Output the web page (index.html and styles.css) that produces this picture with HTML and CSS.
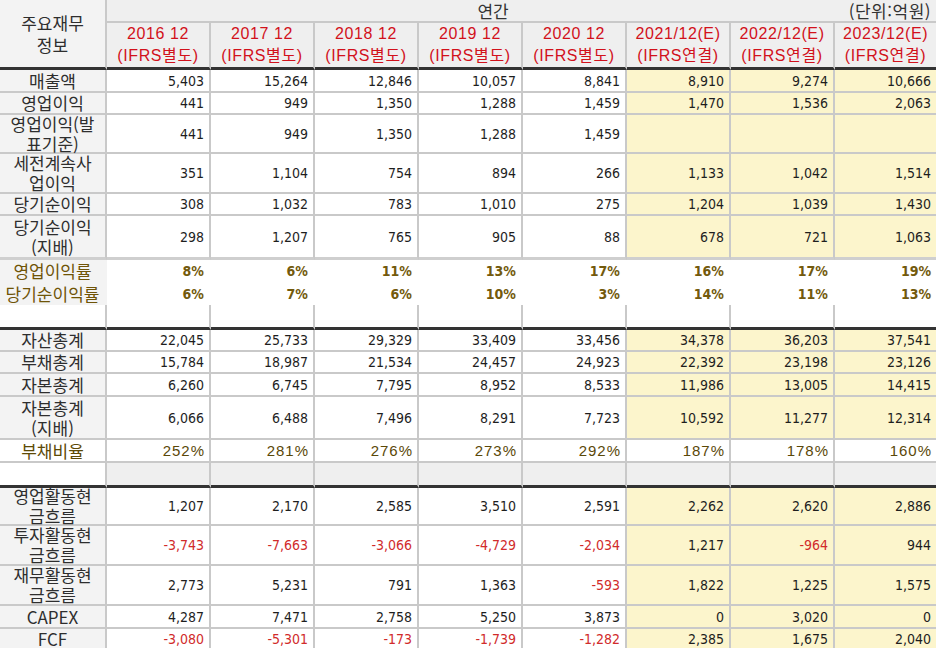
FILE: index.html
```html
<!DOCTYPE html>
<html lang="ko">
<head>
<meta charset="utf-8">
<title>주요재무정보</title>
<link rel="stylesheet" href="styles.css">
</head>
<body>
<table class="fin">
  <colgroup>
    <col class="c-lbl"><col class="c-d"><col class="c-d"><col class="c-d"><col class="c-d"><col class="c-d"><col class="c-d"><col class="c-d"><col class="c-last">
  </colgroup>
  <thead>
    <tr class="h-top">
      <th class="lbl corner" rowspan="2"><div class="ln22">주요재무</div><div class="ln22">정보</div></th>
      <th class="top" colspan="8"><div class="top-in"><span class="period">연간</span><span class="unit">(단위:억원)</span></div></th>
    </tr>
    <tr class="h-year">
      <th class="yr"><div class="ln22">2016 12</div><div class="ln22">(IFRS별도)</div></th>
      <th class="yr"><div class="ln22">2017 12</div><div class="ln22">(IFRS별도)</div></th>
      <th class="yr"><div class="ln22">2018 12</div><div class="ln22">(IFRS별도)</div></th>
      <th class="yr"><div class="ln22">2019 12</div><div class="ln22">(IFRS별도)</div></th>
      <th class="yr"><div class="ln22">2020 12</div><div class="ln22">(IFRS별도)</div></th>
      <th class="yr"><div class="ln22">2021/12(E)</div><div class="ln22">(IFRS연결)</div></th>
      <th class="yr"><div class="ln22">2022/12(E)</div><div class="ln22">(IFRS연결)</div></th>
      <th class="yr"><div class="ln22">2023/12(E)</div><div class="ln22">(IFRS연결)</div></th>
    </tr>
  </thead>
  <tbody>
    <tr class="h23"><th class="lbl">매출액</th><td>5,403</td><td>15,264</td><td>12,846</td><td>10,057</td><td>8,841</td><td class="est">8,910</td><td class="est">9,274</td><td class="est">10,666</td></tr>
    <tr class="h22"><th class="lbl">영업이익</th><td>441</td><td>949</td><td>1,350</td><td>1,288</td><td>1,459</td><td class="est">1,470</td><td class="est">1,536</td><td class="est">2,063</td></tr>
    <tr class="h39"><th class="lbl"><div class="two">영업이익(발<br>표기준)</div></th><td>441</td><td>949</td><td>1,350</td><td>1,288</td><td>1,459</td><td class="est"></td><td class="est"></td><td class="est"></td></tr>
    <tr class="h40"><th class="lbl"><div class="two">세전계속사<br>업이익</div></th><td>351</td><td>1,104</td><td>754</td><td>894</td><td>266</td><td class="est">1,133</td><td class="est">1,042</td><td class="est">1,514</td></tr>
    <tr class="h22"><th class="lbl">당기순이익</th><td>308</td><td>1,032</td><td>783</td><td>1,010</td><td>275</td><td class="est">1,204</td><td class="est">1,039</td><td class="est">1,430</td></tr>
    <tr class="h44 sep-light"><th class="lbl"><div class="two">당기순이익<br>(지배)</div></th><td>298</td><td>1,207</td><td>765</td><td>905</td><td>88</td><td class="est">678</td><td class="est">721</td><td class="est">1,063</td></tr>
    <tr class="h22 ratio"><th class="lbl rlbl">영업이익률</th><td>8%</td><td>6%</td><td>11%</td><td>13%</td><td>17%</td><td>16%</td><td>17%</td><td>19%</td></tr>
    <tr class="h23 ratio"><th class="lbl rlbl">당기순이익률</th><td>6%</td><td>7%</td><td>6%</td><td>10%</td><td>3%</td><td>14%</td><td>11%</td><td>13%</td></tr>
    <tr class="h25 blank dark"><th class="lbl white"></th><td></td><td></td><td></td><td></td><td></td><td></td><td></td><td></td></tr>
    <tr class="h21"><th class="lbl">자산총계</th><td>22,045</td><td>25,733</td><td>29,329</td><td>33,409</td><td>33,456</td><td class="est">34,378</td><td class="est">36,203</td><td class="est">37,541</td></tr>
    <tr class="h22"><th class="lbl">부채총계</th><td>15,784</td><td>18,987</td><td>21,534</td><td>24,457</td><td>24,923</td><td class="est">22,392</td><td class="est">23,198</td><td class="est">23,126</td></tr>
    <tr class="h23"><th class="lbl">자본총계</th><td>6,260</td><td>6,745</td><td>7,795</td><td>8,952</td><td>8,533</td><td class="est">11,986</td><td class="est">13,005</td><td class="est">14,415</td></tr>
    <tr class="h43"><th class="lbl"><div class="two">자본총계<br>(지배)</div></th><td>6,066</td><td>6,488</td><td>7,496</td><td>8,291</td><td>7,723</td><td class="est">10,592</td><td class="est">11,277</td><td class="est">12,314</td></tr>
    <tr class="h23 debt"><th class="lbl white dlbl">부채비율</th><td>252%</td><td>281%</td><td>276%</td><td>273%</td><td>292%</td><td>187%</td><td>178%</td><td>160%</td></tr>
    <tr class="h25 blank gray dark"><th class="lbl white"></th><td></td><td></td><td></td><td></td><td></td><td></td><td></td><td></td></tr>
    <tr class="h38"><th class="lbl"><div class="two">영업활동현<br>금흐름</div></th><td>1,207</td><td>2,170</td><td>2,585</td><td>3,510</td><td>2,591</td><td class="est">2,262</td><td class="est">2,620</td><td class="est">2,886</td></tr>
    <tr class="h40"><th class="lbl"><div class="two">투자활동현<br>금흐름</div></th><td class="neg">-3,743</td><td class="neg">-7,663</td><td class="neg">-3,066</td><td class="neg">-4,729</td><td class="neg">-2,034</td><td class="est">1,217</td><td class="est neg">-964</td><td class="est">944</td></tr>
    <tr class="h40"><th class="lbl"><div class="two">재무활동현<br>금흐름</div></th><td>2,773</td><td>5,231</td><td>791</td><td>1,363</td><td class="neg">-593</td><td class="est">1,822</td><td class="est">1,225</td><td class="est">1,575</td></tr>
    <tr class="h23"><th class="lbl">CAPEX</th><td>4,287</td><td>7,471</td><td>2,758</td><td>5,250</td><td>3,873</td><td class="est">0</td><td class="est">3,020</td><td class="est">0</td></tr>
    <tr class="h22"><th class="lbl">FCF</th><td class="neg">-3,080</td><td class="neg">-5,301</td><td class="neg">-173</td><td class="neg">-1,739</td><td class="neg">-1,282</td><td class="est">2,385</td><td class="est">1,675</td><td class="est">2,040</td></tr>
  </tbody>
</table>
</body>
</html>
```
FILE: styles.css
```css
html, body {
  margin: 0;
  padding: 0;
  background: #ffffff;
}
body {
  font-family: "Noto Sans CJK KR", "Noto Sans", sans-serif;
  color: #333333;
  overflow: hidden;
}
.fin {
  border-collapse: separate;
  border-spacing: 0;
  table-layout: fixed;
  width: 936px;
}
.c-lbl { width: 107px; }
.c-d { width: 104px; }
.c-last { width: 101px; }

.fin th,
.fin td {
  box-sizing: border-box;
  padding: 0;
  border-right: 2px solid #c9c9c9;
  border-bottom: 2px solid #c9c9c9;
  vertical-align: middle;
  overflow: visible;
  white-space: nowrap;
}
.fin tr > *:last-child {
  border-right: 0;
}

.ln22 {
  height: 22px;
  line-height: 22px;
}

/* header */
.h-top { height: 23px; }
.h-year { height: 47px; }
.corner {
  background: #efefef;
  border-bottom: 3px solid #333333 !important;
  font-size: 17px;
  color: #333;
}
.top {
  background: #efefef;
  font-weight: normal;
  font-size: 17px;
  color: #333;
  padding: 0 !important;
}
.top-in {
  display: flex;
  align-items: center;
  height: 21px;
  line-height: 21px;
}
.period {
  flex: 1;
  text-align: center;
  padding-left: 52px;
}
.unit {
  width: 104px;
  text-align: right;
  padding-right: 5px;
  letter-spacing: 0.5px;
}
.yr {
  background: #efefef;
  border-bottom: 3px solid #333333 !important;
  color: #d2111b;
  font-family: "Liberation Sans", "Noto Sans CJK KR", sans-serif;
  font-weight: normal;
  font-size: 16px;
  letter-spacing: 0.6px;
  text-align: center;
}

/* labels */
.lbl {
  background: #f3f3f3;
  font-weight: normal;
  font-size: 17px;
  line-height: 20px;
  color: #2e2e2e;
  text-align: center;
}
.lbl.white { background: #ffffff; }
.two {
  height: 34px;
  display: flex;
  flex-direction: column;
  justify-content: center;
  align-items: center;
  line-height: 20px;
}

/* numbers */
.fin td {
  text-align: right;
  padding-right: 5px;
  font-family: "DejaVu Sans Condensed", "DejaVu Sans", sans-serif;
  font-stretch: condensed;
  font-size: 14px;
  color: #1e1e1e;
  background: #ffffff;
}
.fin td.est { background: #fcf5cc; }
.fin td.neg { color: #d12b2b; }

/* row heights */
.h21 { height: 21px; }
.h22 { height: 22px; }
.h23 { height: 23px; }
.h25 { height: 25px; }
.h38 { height: 38px; }
.h39 { height: 39px; }
.h40 { height: 40px; }
.h43 { height: 43px; }
.h44 { height: 44px; }

.sep-light > * {
  border-bottom: 3px solid #cfcfcf !important;
}

/* ratio rows */
.ratio > * {
  border-bottom: 0 !important;
  border-right-color: transparent !important;
}
.ratio .rlbl {
  color: #6f5407;
  background: #f3f3f3;
}
.fin .ratio td {
  font-weight: bold;
  font-size: 14px;
  color: #735a0c;
}

.blank > * {
  border-bottom: 0;
}
.dark > * {
  border-bottom: 3px solid #333333 !important;
}
.fin .gray td { background: #efefef; }

/* debt ratio row */
.debt .dlbl { color: #5d4a06; }
.fin .debt td {
  font-family: "Liberation Sans", sans-serif;
  font-stretch: normal;
  font-size: 15px;
  letter-spacing: 1px;
  color: #5a4808;
  padding-right: 4px;
}
```
